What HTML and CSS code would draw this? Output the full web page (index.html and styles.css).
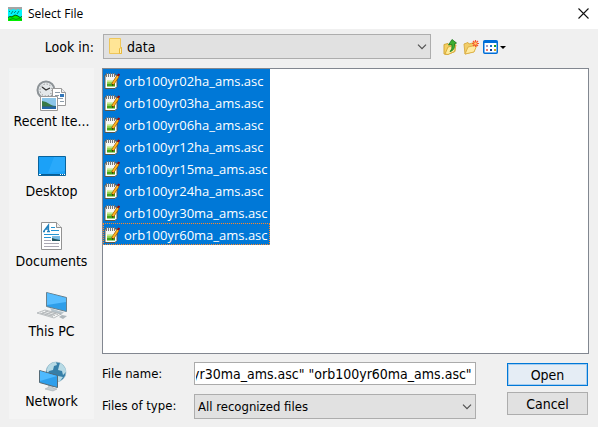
FILE: index.html
```html
<!DOCTYPE html>
<html lang="en">
<head>
<meta charset="utf-8">
<meta name="viewport" content="width=device-width, initial-scale=1">
<title>Select File</title>
<link rel="stylesheet" href="styles.css">
</head>
<body>
<svg class="symbols" aria-hidden="true">
  <symbol id="notepad" viewBox="0 0 16 17">
    <path d="M1 2h12v11.500l-2 2H1z" fill="#fff" stroke="#605848"/>
    <path d="M2 3h10v4H2z" fill="#f7f8f4"/>
    <path d="M3 7h8v1.500H3z" fill="#d5efb0"/>
    <path d="M3 8.500h8v2H3z" fill="#9bd84a"/>
    <path d="M3 10.500h8v3H3z" fill="#45a516"/>
    <path d="M2.500 0v4M4.500 0v4M6.500 0v4M8.500 0v4M10.500 0v4" stroke="#777"/>
    <path d="M3.500 1v2M5.500 1v2M7.500 1v2M9.500 1v2" stroke="#eee"/>
    <path d="M14 3L8.500 11.500" stroke="#8a4b00" stroke-width="3"/>
    <path d="M14 3L8.800 11" stroke="#ffb521" stroke-width="2"/>
    <path d="M13.500 1.500l2 1" stroke="#8f0c10" stroke-width="2.500"/>
    <path d="M8 13l.3-2 1.200.800z" fill="#302010"/>
  </symbol>
  <symbol id="chevron" viewBox="0 0 10 6"><path d="M1 .7L5 4.700 9 .7" fill="none" stroke="#505050" stroke-width="1.200"/></symbol>
</svg>
<div class="dialog">
  <header class="titlebar">
    <svg class="app-icon" viewBox="0 0 14 14" aria-hidden="true">
      <path d="M0 0h14v14H0z" fill="#00f4fa"/>
      <path d="M0 0h14v2l-2 1-2-1-2 1-3-1-2 1-3-1z" fill="#a5a5a5"/>
      <path d="M3 7l2-3M6 6l2-2M9 7l2-3M1 5l1-1" stroke="#087" />
      <path d="M0 11l4-2 3-1 3 1 4 2v3H0z" fill="#00f000"/>
      <path d="M0 10.500l2-1 2 .5 3-2 3 1 2 1.500 2-1" fill="none" stroke="#075b12"/>
      <path d="M1 13l4-1.500 3 1 3-1 3 1.500" fill="none" stroke="#00a010"/>
    </svg>
    <h1 class="title">Select File</h1>
    <button class="close" type="button" aria-label="Close">
      <svg viewBox="0 0 11 11" width="11" height="11" aria-hidden="true"><path d="M.5.5l10 10M10.500.5l-10 10" stroke="#111" stroke-width="1.100"/></svg>
    </button>
  </header>
  <main class="content">
    <label class="look-label" for="folder">Look in:</label>
    <div class="toolbar">
      <div class="picker folder-picker">
        <svg class="folder-icon" viewBox="0 0 14 16" aria-hidden="true">
          <path d="M.5.5h11v9h1v6H.5z" fill="#ffe596" stroke="#eec65a"/>
          <path d="M10.500 15.500v-5l2-1v6z" fill="#fff0b8" stroke="#e8b93c"/>
        </svg>
        <select id="folder"><option>data</option></select>
        <svg class="chevron" aria-hidden="true"><use href="#chevron"/></svg>
      </div>
      <div class="tools">
        <button class="tool" type="button" aria-label="Up one level">
          <svg width="16" height="16" viewBox="0 0 16 16" aria-hidden="true">
            <path d="M1 5.500l4-1 1 1 6-2v9l-8 3-3-.5z" fill="#f5cf61" stroke="#d3a73a"/>
            <path d="M2 15l3-7 8-2-1.500 6.500L5 15.500z" fill="#ffec9e" stroke="#d8ac3d"/>
            <path d="M7 12.500c2-2 2.200-4 1.800-7L5.500 6 9 .5 13.500 4l-2 .7c.6 4-1 7-4.500 7.800z" fill="#3db032" stroke="#16751b" stroke-width=".8"/>
          </svg>
        </button>
        <button class="tool" type="button" aria-label="New folder">
          <svg width="16" height="16" viewBox="0 0 16 16" aria-hidden="true">
            <path d="M1 5l4-1.500L6 5l5-1.500v9L2 15z" fill="#f2cd68" stroke="#d9ae48"/>
            <path d="M2 15l3-7 9-2-3 7z" fill="#ffeba2" stroke="#ddb249"/>
            <path d="M12.500 1v7M9 4.500h7M10 2l5 5M15 2l-5 5" stroke="#f8572c" stroke-width="1.200"/>
            <circle cx="12.500" cy="4.500" r="1.300" fill="#ffd36b"/>
          </svg>
        </button>
        <button class="tool" type="button" aria-label="View menu">
          <svg width="23" height="14" viewBox="0 0 23 14" aria-hidden="true">
            <rect x=".75" y=".75" width="13.500" height="12.500" rx="1" fill="#fff" stroke="#006ed8" stroke-width="1.500"/>
            <path d="M1 1h13v2H1z" fill="#006ed8"/>
            <path d="M3 5h2v2H3z" fill="#a29bc4"/><path d="M7 5h2v2H7z" fill="#1670cf"/><path d="M11 5h2v2h-2z" fill="#149a23"/>
            <path d="M3 9h2v2H3z" fill="#ee7668"/><path d="M7 9h2v2H7z" fill="#123e91"/><path d="M11 9h2v2h-2z" fill="#d2a51b"/>
            <path d="M17 6h6l-3 3z" fill="#000"/>
          </svg>
        </button>
      </div>
    </div>
    <nav class="places" aria-label="Places">
      <button class="place" type="button">
        <svg viewBox="0 0 32 32" aria-hidden="true">
          <circle cx="10" cy="10" r="8.500" fill="#e4e8ea" stroke="#8d9397" stroke-width="2"/>
          <circle cx="10" cy="10" r="6" fill="none" stroke="#777" stroke-dasharray="1 2.140"/>
          <path d="M6 7l4 3 4-2" fill="none" stroke="#333" stroke-width="1.300"/>
          <path d="M16.500 8.500h9l4 4v13h-13z" fill="#fff" stroke="#999"/>
          <path d="M25.500 8.500v4h4" fill="#eee" stroke="#999"/>
          <path d="M19 12.500h5M19 15.500h4M19 18.500h8M24 21.500h4" stroke="#8b9ba8"/>
          <path d="M24 14h4v3h-4z" fill="#3477b9"/>
          <path d="M4.500 16.500h17v14h-17z" fill="#fff" stroke="#999"/>
          <path d="M6 18h14v11H6z" fill="#8cc6e9"/>
          <path d="M6 23l5 2 9 1v3H6z" fill="#326774"/><path d="M6 21l4 1 7 4H6z" fill="#397947"/><path d="M6 27h14v2H6z" fill="#2366a7"/>
        </svg>
        <span>Recent Ite...</span>
      </button>
      <button class="place" type="button">
        <svg viewBox="0 0 32 32" aria-hidden="true">
          <path d="M2.500 6.500h27v19h-27z" fill="#1ba1f7" stroke="#08639d"/>
          <path d="M18 7h11v14L12 23z" fill="#35b0ff" opacity=".55"/>
          <path d="M3 24.500h26" stroke="#075c93"/><path d="M3 24.500h2M24 24.500h1M26 24.500h1M28 24.500h1" stroke="#fff"/>
        </svg>
        <span>Desktop</span>
      </button>
      <button class="place" type="button">
        <svg viewBox="0 0 32 32" aria-hidden="true">
          <path d="M5.500 2.500h15l5 5v22h-20z" fill="#fff" stroke="#929292"/>
          <path d="M20.500 2.500v5h5" fill="#eee" stroke="#929292"/>
          <path d="M8 11l4.500-6v6M10 9h3M7 11.500h2M11 11.500h3" fill="none" stroke="#2383be" stroke-width="1.300"/>
          <path d="M15 7.500h4M15 10.500h8M8 14.500h15M8 17.500h7" stroke="#2493d2"/>
          <path d="M8 20.500h7M8 23.500h15M8 26.500h15" stroke="#aaa8b4"/>
          <path d="M16 16h8v5h-8z" fill="#7bbbe2"/><path d="M16 18l3 1 5 1v1h-8z" fill="#23525b"/>
        </svg>
        <span>Documents</span>
      </button>
      <button class="place" type="button">
        <svg viewBox="0 0 32 32" aria-hidden="true">
          <path d="M14 18l9 3 5 1-3 3-9-3z" fill="#b8c4cb"/>
          <path d="M10.500 2.500l20 5v14l-20-5z" fill="#2e9ee9" stroke="#68818e"/>
          <path d="M11 3l19 5v4L11 15z" fill="#57bdff"/>
          <path d="M1 23l8-3 16 4-7 4z" fill="#f5f6f6" stroke="#a2a7aa" stroke-width=".7"/>
          <path d="M4 23l13 3.500M6 22l13 3.500M9 21l13 3.500M6 24l6-3M10 25l6-3M14 26l6-3" stroke="#b5b9bb"/>
          <path d="M23 27l3-2 5 1-4 3z" fill="#aeb6bb"/>
        </svg>
        <span>This PC</span>
      </button>
      <button class="place" type="button">
        <svg viewBox="0 0 32 32" aria-hidden="true">
          <circle cx="20" cy="12" r="10" fill="#367fa8" stroke="#9bbac8" stroke-width=".6"/>
          <path d="M11 9c1-4 5-7 9-7l1 3-3 1-1 4-4 1-2 4zM24 3c4 2 6 6 6 9l-3 3-1-4-4-1 1-4zM22 16l5 1-3 4-4 1z" fill="#b7dae5"/>
          <path d="M12 25l5 1v2l4 1-4 2-8-2 4-2z" fill="#c5cdd1" stroke="#9aa5aa" stroke-width=".5"/>
          <path d="M3.500 10.500l18 5v12l-18-5z" fill="#2e9fec" stroke="#556a76"/>
          <path d="M4 11l17 5-17 5z" fill="#4ebaff"/>
        </svg>
        <span>Network</span>
      </button>
    </nav>
    <div class="pane">
      <ul class="files" role="listbox" aria-label="Files" aria-multiselectable="true">
        <li class="file" role="option" aria-selected="true"><svg aria-hidden="true"><use href="#notepad"/></svg><span>orb100yr02ha_ams.asc</span></li>
        <li class="file" role="option" aria-selected="true"><svg aria-hidden="true"><use href="#notepad"/></svg><span>orb100yr03ha_ams.asc</span></li>
        <li class="file" role="option" aria-selected="true"><svg aria-hidden="true"><use href="#notepad"/></svg><span>orb100yr06ha_ams.asc</span></li>
        <li class="file" role="option" aria-selected="true"><svg aria-hidden="true"><use href="#notepad"/></svg><span>orb100yr12ha_ams.asc</span></li>
        <li class="file" role="option" aria-selected="true"><svg aria-hidden="true"><use href="#notepad"/></svg><span>orb100yr15ma_ams.asc</span></li>
        <li class="file" role="option" aria-selected="true"><svg aria-hidden="true"><use href="#notepad"/></svg><span>orb100yr24ha_ams.asc</span></li>
        <li class="file" role="option" aria-selected="true"><svg aria-hidden="true"><use href="#notepad"/></svg><span>orb100yr30ma_ams.asc</span></li>
        <li class="file file-current" role="option" aria-selected="true"><svg aria-hidden="true"><use href="#notepad"/></svg><span>orb100yr60ma_ams.asc</span></li>
      </ul>
      <form class="fields">
        <div class="inputs">
          <label for="name">File name:</label>
          <input id="name" type="text" value="yr30ma_ams.asc&quot; &quot;orb100yr60ma_ams.asc&quot;">
          <label for="type">Files of type:</label>
          <div class="picker">
            <select id="type"><option>All recognized files</option></select>
            <svg class="chevron" aria-hidden="true"><use href="#chevron"/></svg>
          </div>
        </div>
        <div class="actions">
          <button class="action action-default" type="button">Open</button>
          <button class="action" type="button">Cancel</button>
        </div>
      </form>
    </div>
  </main>
</div>
<script src="script.js"></script>
</body>
</html>
```
FILE: script.js
```js
// Keep the end of a long file list in view.
const nameField = document.getElementById("name");
nameField.scrollLeft = nameField.scrollWidth;
```
FILE: styles.css
```css
* { box-sizing: border-box; }

body {
  margin: 0;
  background: #f0f0f0;
  color: #000;
  font: 14px/18px Tahoma, "DejaVu Sans Condensed", "Noto Sans", sans-serif;
}

button, input, select { font: inherit; color: inherit; margin: 0; }
button { padding: 0; border: 0; background: none; }
svg { display: block; flex: none; }
.symbols { position: absolute; width: 0; height: 0; }

.dialog { display: flex; flex-direction: column; min-height: 100vh; }

.titlebar {
  display: flex;
  align-items: center;
  gap: 6px;
  height: 29px;
  padding: 0 9px 2px 8px;
  background: #fff;
}
.app-icon { width: 14px; height: 14px; }
.title { flex: 1; margin: 0; font: 12px/16px "Open Sans", sans-serif; }

.content {
  flex: 1;
  display: grid;
  grid-template-columns: 85px minmax(0, 1fr);
  grid-template-rows: auto 1fr;
  gap: 9px 8px;
  padding: 5px 9px 8px;
}

.look-label { align-self: center; justify-self: end; }
.toolbar { display: flex; gap: 12px; padding-left: 1px; }
.picker { position: relative; display: grid; }
.folder-picker { flex: 1; }
.picker select {
  appearance: none;
  width: 100%;
  height: 25px;
  padding: 0 24px 0 3px;
  border: 1px solid #adadad;
  border-radius: 0;
  background: #e1e1e1;
}
.folder-picker select { padding-left: 23px; }
.folder-icon { position: absolute; left: 6px; top: 4px; width: 14px; height: 16px; }
.chevron { position: absolute; right: 4px; top: 10px; width: 10px; height: 6px; }

.tools { display: flex; align-items: center; gap: 4px; padding-right: 83px; }

.places { background: #f4f4f4; }
.place {
  display: flex;
  flex-direction: column;
  align-items: center;
  width: 100%;
  height: 70px;
  padding-top: 12px;
}
.place svg { width: 32px; height: 32px; }
.place span { white-space: nowrap; }

.pane { display: flex; flex-direction: column; gap: 8px; }
.files {
  flex: 1;
  margin: 0;
  padding: 0;
  border: 1px solid #828790;
  background: #fff;
  list-style: none;
}
.file {
  display: flex;
  align-items: center;
  gap: 4px;
  width: 167px;
  height: 22px;
  padding: 2px 0 0 1px;
  background: #0078d7;
  color: #fff;
  font: 13px/18px "Open Sans", sans-serif;
  white-space: nowrap;
}
.file svg { width: 16px; height: 17px; }
.file-current { outline: 1px dotted #ff8728; outline-offset: -1px; }

.fields { display: flex; gap: 31px; padding-right: 1px; }
.inputs {
  flex: 1;
  display: grid;
  grid-template-columns: 92px minmax(0, 1fr);
  align-items: start;
  row-gap: 8px;
}
.inputs label { font-size: 13px; line-height: 24px; }
.inputs select { font-size: 13px; }
.inputs input {
  width: 100%;
  height: 23px;
  padding: 0 3px 0 1px;
  border: 1px solid #ababab;
  background: #fff;
}
.actions { display: flex; flex-direction: column; gap: 6px; padding-top: 1px; }
.action { width: 81px; height: 23px; border: 1px solid #adadad; background: #e1e1e1; }
.action-default { border-color: #0078d7; background: #e5edf5; box-shadow: inset 0 0 0 1px #a5cdf0; }
```
